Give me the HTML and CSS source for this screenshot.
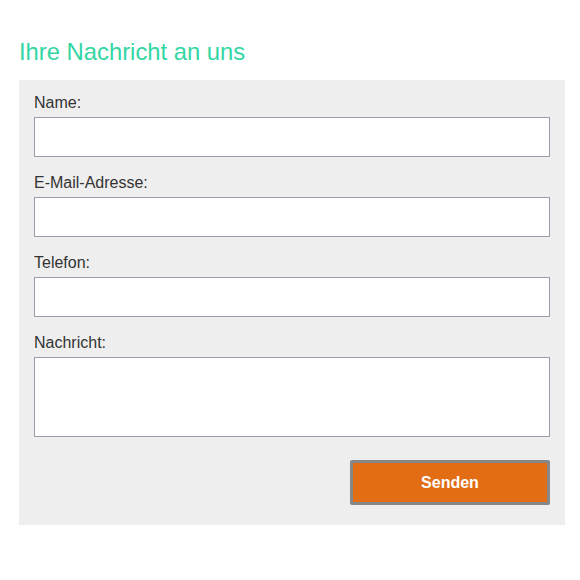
FILE: index.html
```html
<!DOCTYPE html>
<html lang="de">
<head>
<meta charset="utf-8">
<title>Kontakt</title>
<link rel="stylesheet" href="styles.css">
</head>
<body>
<div class="page">
  <h2 class="title">Ihre Nachricht an uns</h2>
  <form class="panel">
    <label class="label" for="name">Name:</label>
    <input class="field" id="name" type="text">
    <label class="label" for="mail">E-Mail-Adresse:</label>
    <input class="field" id="mail" type="email">
    <label class="label" for="tel">Telefon:</label>
    <input class="field" id="tel" type="tel">
    <label class="label" for="msg">Nachricht:</label>
    <textarea class="field area" id="msg"></textarea>
    <div class="actions">
      <button class="send" type="button">Senden</button>
    </div>
  </form>
</div>
</body>
</html>
```
FILE: styles.css
```css
html, body {
  margin: 0;
  padding: 0;
  background: #ffffff;
}
body {
  font-family: "Liberation Sans", Arial, sans-serif;
  color: #333333;
}
.page {
  padding: 38px 15px 0 19px;
}
.title {
  margin: 0 0 15px 0;
  font-size: 23.8px;
  font-weight: normal;
  line-height: 27px;
  color: #33d6a3;
}
.panel {
  display: flex;
  flex-direction: column;
  background: #eeeeee;
  padding: 13px 15px 20px 15px;
}
.label {
  display: block;
  font-size: 16px;
  line-height: 20px;
  margin-bottom: 4px;
  color: #333333;
}
.field {
  display: block;
  box-sizing: border-box;
  width: 100%;
  height: 40px;
  margin: 0 0 16px 0;
  border: 1px solid #9b9bab;
  background: #ffffff;
  font-family: inherit;
  font-size: 16px;
  padding: 6px 8px;
}
.area {
  height: 80px;
  resize: none;
  margin-bottom: 0;
}
.actions {
  display: flex;
  justify-content: flex-end;
  margin-top: 23px;
}
.send {
  box-sizing: border-box;
  width: 200px;
  height: 45px;
  background: #e26d14;
  border: 3px solid #878787;
  border-radius: 2px;
  color: #ffffff;
  font-family: inherit;
  font-size: 16px;
  font-weight: bold;
  cursor: pointer;
}
```
